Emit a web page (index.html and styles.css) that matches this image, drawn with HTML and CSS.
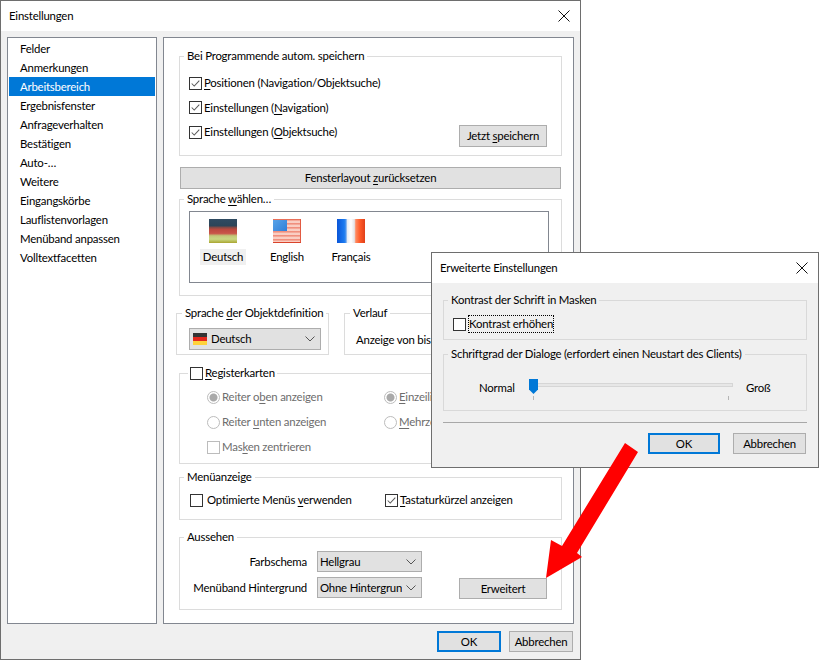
FILE: index.html
```html
<!DOCTYPE html>
<html lang="de">
<head>
<meta charset="utf-8">
<title>Einstellungen</title>
<link rel="stylesheet" href="styles.css">
</head>
<body>
<div class="window main-window">
  <header class="titlebar">
    <span>Einstellungen</span>
    <svg class="close" viewBox="0 0 12 12"><path d="M.5.5l11 11M11.5.5l-11 11"/></svg>
  </header>
  <div class="main-body">
    <div class="columns">
      <ul class="nav">
        <li>Felder</li>
        <li>Anmerkungen</li>
        <li class="selected">Arbeitsbereich</li>
        <li>Ergebnisfenster</li>
        <li>Anfrageverhalten</li>
        <li>Bestätigen</li>
        <li>Auto-…</li>
        <li>Weitere</li>
        <li>Eingangskörbe</li>
        <li>Lauflistenvorlagen</li>
        <li>Menüband anpassen</li>
        <li>Volltextfacetten</li>
      </ul>
      <div class="panel">
        <fieldset class="group g-save">
          <legend>Bei Programmende autom. speichern</legend>
          <div class="save-checks">
            <label class="check"><span class="box"><svg class="tick" viewBox="0 0 13 13"><path d="M2 6.5l3 3 6-6.5"/></svg></span><span><u>P</u>ositionen (Navigation/Objektsuche)</span></label>
            <label class="check"><span class="box"><svg class="tick" viewBox="0 0 13 13"><path d="M2 6.5l3 3 6-6.5"/></svg></span><span>Einstellungen (<u>N</u>avigation)</span></label>
            <label class="check"><span class="box"><svg class="tick" viewBox="0 0 13 13"><path d="M2 6.5l3 3 6-6.5"/></svg></span><span>Einstellungen (<u>O</u>bjektsuche)</span></label>
          </div>
          <button class="btn btn-save">Jetzt <u>s</u>peichern</button>
        </fieldset>
        <button class="btn btn-reset">Fensterlayout <u>z</u>urücksetzen</button>
        <fieldset class="group g-lang">
          <legend>Sprache <u>w</u>ählen…</legend>
          <div class="lang-list">
            <div class="lang"><div class="flag flag-de"></div><span class="lang-name active">Deutsch</span></div>
            <div class="lang"><div class="flag flag-en"></div><span class="lang-name">English</span></div>
            <div class="lang"><div class="flag flag-fr"></div><span class="lang-name">Français</span></div>
          </div>
        </fieldset>
        <div class="row-two">
          <fieldset class="group g-objlang">
            <legend>Sprache <u>d</u>er Objektdefinition</legend>
            <div class="select select-obj"><span class="mini-flag"></span><span class="select-text">Deutsch</span><svg class="chev" viewBox="0 0 10 6"><path d="M.5.5L5 5 9.5.5"/></svg></div>
          </fieldset>
          <fieldset class="group g-history">
            <legend>Verlauf</legend>
            <div class="history-text">Anzeige von bis</div>
          </fieldset>
        </div>
        <fieldset class="group g-tabs">
          <legend class="legend-check"><label class="check"><span class="box"></span><span><u>R</u>egisterkarten</span></label></legend>
          <div class="tab-grid">
            <label class="radio off"><span class="dot on"></span><span>Reiter o<u>b</u>en anzeigen</span></label>
            <label class="radio off"><span class="dot on"></span><span><u>E</u>inzeilig</span></label>
            <label class="radio off"><span class="dot"></span><span>Reiter <u>u</u>nten anzeigen</span></label>
            <label class="radio off"><span class="dot"></span><span><u>M</u>ehrzeilig</span></label>
            <label class="radio off"><span class="box box-off"></span><span>Mas<u>k</u>en zentrieren</span></label>
          </div>
        </fieldset>
        <fieldset class="group g-menu">
          <legend>Menüanzeige</legend>
          <div class="menu-row">
            <label class="check"><span class="box"></span><span class="wide-gap">Optimierte Menüs <u>v</u>erwenden</span></label>
            <label class="check"><span class="box"><svg class="tick" viewBox="0 0 13 13"><path d="M2 6.5l3 3 6-6.5"/></svg></span><span><u>T</u>astaturkürzel anzeigen</span></label>
          </div>
        </fieldset>
        <fieldset class="group g-look">
          <legend>Aussehen</legend>
          <div class="look-grid">
            <span class="look-label">Farbschema</span>
            <div class="select select-look"><span class="select-text">Hellgrau</span><svg class="chev" viewBox="0 0 10 6"><path d="M.5.5L5 5 9.5.5"/></svg></div>
            <span class="look-label">Menüband Hintergrund</span>
            <div class="select select-look"><span class="select-text clip">Ohne Hintergrund</span><svg class="chev" viewBox="0 0 10 6"><path d="M.5.5L5 5 9.5.5"/></svg></div>
          </div>
          <button class="btn btn-more">Erweitert</button>
        </fieldset>
      </div>
    </div>
    <footer class="main-footer">
      <button class="btn btn-ok">OK</button>
      <button class="btn btn-cancel">Abbrechen</button>
    </footer>
  </div>
</div>

<div class="window sub-window">
  <header class="titlebar">
    <span>Erweiterte Einstellungen</span>
    <svg class="close" viewBox="0 0 12 12"><path d="M.5.5l11 11M11.5.5l-11 11"/></svg>
  </header>
  <div class="sub-body">
    <fieldset class="group g-contrast">
      <legend>Kontrast der Schrift in Masken</legend>
      <label class="check"><span class="box box-white"></span><span class="focus">Kontrast erhöhen</span></label>
    </fieldset>
    <fieldset class="group g-size">
      <legend>Schriftgrad der Dialoge (erfordert einen Neustart des Clients)</legend>
      <div class="slider-row">
        <span class="slider-min">Normal</span>
        <div class="slider">
          <div class="track"></div>
          <svg class="thumb" viewBox="0 0 9 15"><path d="M0 0h9v10.500l-4.500 4.500L0 10.500z"/></svg>
          <div class="ticks"><i></i><i></i></div>
        </div>
        <span class="slider-max">Groß</span>
      </div>
    </fieldset>
    <hr class="sep">
    <div class="sub-footer">
      <button class="btn btn-ok sub-ok">OK</button>
      <button class="btn sub-cancel">Abbrechen</button>
    </div>
  </div>
</div>

<svg class="arrow" viewBox="0 0 100 140"><path d="M79 0L92 9 31 110 36 114 0 135 5 97 16 103z" fill="#ff0000"/></svg>
</body>
</html>
```

FILE: styles.css
```css
* { box-sizing: border-box; }
html, body { margin: 0; padding: 0; }
body {
  width: 819px;
  height: 660px;
  position: relative;
  overflow: hidden;
  background: #fff;
  font-family: Lato, "Liberation Sans", sans-serif;
  font-size: 11.4px;
  letter-spacing: -0.2px;
  line-height: 16px;
  color: #000;
}
u { text-decoration-thickness: 1px; text-underline-offset: 2px; }

.window {
  position: absolute;
  border: 1px solid #6e6e6e;
  background: #f0f0f0;
  display: flex;
  flex-direction: column;
}
.main-window { left: 0; top: 0; width: 581px; height: 660px; }
.sub-window { left: 431px; top: 252px; width: 388px; height: 216px; }

.titlebar {
  height: 30px;
  flex: none;
  background: #fff;
  display: flex;
  align-items: center;
  justify-content: space-between;
  padding: 0 10px 0 8px;
}
.close { width: 12px; height: 12px; fill: none; stroke: #111; stroke-width: 1; }

.main-body { flex: 1; padding: 6px 6px 0; display: flex; flex-direction: column; }
.columns { display: flex; gap: 6px; height: 587px; }

.nav {
  width: 150px;
  margin: 0;
  padding: 1px;
  list-style: none;
  background: #fff;
  border: 1px solid #828790;
}
.nav li { height: 19px; line-height: 19px; padding-left: 11px; }
.nav .selected { background: #0078d7; color: #fff; }

.panel {
  width: 411px;
  background: #fff;
  border: 1px solid #828790;
  padding: 10px 0 0 15px;
}

.group {
  margin: 0;
  padding: 0;
  min-width: 0;
  border: 1px solid #dcdcdc;
  position: relative;
}
.group legend { margin-left: 4px; padding: 0 3px; line-height: 16px; height: 16px; white-space: nowrap; }

.check, .radio { display: flex; align-items: center; gap: 2px; height: 16px; white-space: nowrap; }
.box {
  width: 13px;
  height: 13px;
  flex: none;
  border: 1px solid #333;
  background: #fff;
  display: block;
}
.box-white { background: #fff; }
.box-off { border-color: #bcbcbc; }
.tick { display: block; width: 11px; height: 11px; fill: none; stroke: #5a5a5a; stroke-width: 1.2; }

.dot {
  width: 13px;
  height: 13px;
  flex: none;
  border: 1px solid #bcbcbc;
  border-radius: 50%;
  background: #fff;
}
.dot.on { background: radial-gradient(circle, #a9a9a9 0 3.5px, #fff 4.5px); }
.off { color: #6d6d6d; }

.btn {
  font: inherit;
  letter-spacing: inherit;
  color: #000;
  background: #e1e1e1;
  border: 1px solid #adadad;
  padding: 0;
  display: block;
}

/* save group */
.g-save { width: 383px; height: 108px; display: flex; justify-content: space-between; }
.save-checks { padding: 11px 0 0 9px; display: flex; flex-direction: column; gap: 8.500px; }
.btn-save { width: 88px; height: 22px; margin: 61px 14px 0 0; }
.btn-reset { width: 381px; height: 22px; margin: 11px 0 2px 1px; }

/* language group */
.g-lang { width: 383px; height: 105px; }
.lang-list {
  margin: 4px 0 0 9px;
  width: 360px;
  height: 72px;
  border: 1px solid #828790;
  padding: 7px 0 0 1px;
  display: flex;
}
.lang { width: 64px; display: flex; flex-direction: column; align-items: center; gap: 6px; }
.lang-name { padding: 0 3px; height: 16px; }
.lang-name.active { background: #f0f0f0; }
.flag { width: 28px; height: 24px; }
.flag-de {
  background:
    linear-gradient(to bottom, #2f4b62 0, #2c4559 28%, #8b4a44 36%, #bd4a40 44%, #c9564a 60%, #c2c878 70%, #c9d884 84%, #aaa530 100%);
}
.flag-en {
  background:
    linear-gradient(135deg, #5aa4e8, #2f7fd8) left top / 14px 12px no-repeat,
    repeating-linear-gradient(to bottom, #ee8270 0, #f6b5a6 2px, #fde6df 3px, #f6b5a6 4px);
  box-shadow: inset 0 -1px 0 #d9432b, inset -1px 0 0 #e25a42, inset 0 1px 0 #e8705a;
}
.flag-fr {
  background: linear-gradient(to right, #0a55d8 0, #1a7af0 26%, #4f96ee 32%, #e8ecf4 37%, #fff 50%, #e4e4e8 62%, #ff8a60 67%, #ff5a28 82%, #e0401a 100%);
}

/* object language + history */
.row-two { display: flex; gap: 15px; margin: 9px 0 10px -3px; }
.g-objlang { width: 153px; height: 50px; }
.g-history { width: 218px; height: 50px; margin-left: 0; }
.g-objlang legend, .g-history legend { margin-left: 5px; }
.select {
  background: #e1e1e1;
  border: 1px solid #adadad;
  display: flex;
  align-items: center;
  padding-left: 2px;
  position: relative;
  white-space: nowrap;
}
.select-obj { width: 132px; height: 22px; margin: 7px 0 0 12px; padding-left: 3px; gap: 4px; }
.mini-flag {
  width: 14px;
  height: 12px;
  background: linear-gradient(to bottom, #333 0 33%, #e2261c 33% 66%, #ffd23a 66%);
}
.select-text { flex: 1; min-width: 0; overflow: hidden; }
.select-text.clip { margin-right: 19px; }
.chev {
  position: absolute;
  right: 5px;
  top: 7px;
  width: 10px;
  height: 6px;
  fill: none;
  stroke: #555;
  stroke-width: 1;
}
.history-text { padding: 11px 0 0 11px; white-space: nowrap; }

/* tabs */
.g-tabs { width: 383px; height: 99px; }
.legend-check { padding: 0 2px !important; margin-left: 8px !important; }
.tab-grid {
  display: grid;
  grid-template-columns: 177px 1fr;
  row-gap: 9px;
  padding: 8px 0 0 27px;
}

/* menu */
.g-menu { width: 383px; height: 51px; margin-top: 5px; }
.menu-row { display: grid; grid-template-columns: 195px 1fr; padding: 7px 0 0 10px; }
.wide-gap { margin-left: 2px; }

/* look */
.g-look { width: 383px; height: 81px; margin-top: 9px; display: flex; justify-content: space-between; }
.look-grid {
  display: grid;
  grid-template-columns: 127px 105px;
  column-gap: 10px;
  row-gap: 5px;
  padding-top: 6px;
  align-content: start;
}
.look-label { text-align: right; align-self: center; white-space: nowrap; }
.select-look { height: 21px; }
.btn-more { width: 88px; height: 21px; margin: 33px 14px 0 0; }

/* footer */
.main-footer { display: flex; justify-content: flex-end; gap: 8px; padding: 7px 1px 0 0; }
.btn-ok { width: 64px; height: 21px; border: 2px solid #0078d7; }
.btn-cancel { width: 64px; height: 21px; }

/* sub dialog */
.sub-body { padding: 9px 11px 0; flex: 1; }
.sub-body .group { border-color: #d9d9d9; width: 364px; }
.g-contrast { height: 48px; }
.g-contrast .check { margin: 8px 0 0 9px; gap: 3px; }
.focus { outline: 1px dotted #000; outline-offset: 0; }
.g-size { height: 65px; margin-top: 6px; }
.slider-row { display: flex; align-items: flex-start; padding: 17px 0 0 35px; }
.slider-min { width: 50px; margin-top: 1px; }
.slider-max { margin-top: 1px; }
.slider { width: 204px; height: 24px; position: relative; margin-right: 13px; }
.track { position: absolute; left: 1px; right: 0; top: 4px; height: 4px; background: #e7e7e7; border: 1px solid #d6d6d6; }
.thumb { position: absolute; left: 0; top: 0; width: 9px; height: 15px; fill: #0078d7; }
.ticks { position: absolute; left: 4px; right: 4px; top: 17px; display: flex; justify-content: space-between; }
.ticks i { width: 1px; height: 4px; background: #b5b5b5; display: block; }
.sep { border: 0; height: 1px; background: #a8a8a8; margin: 11px 0 0; width: 364px; }
.sub-footer { display: flex; justify-content: flex-end; gap: 13px; margin: 10px 1px 0 0; }
.sub-ok { width: 72px; }
.sub-cancel { width: 73px; height: 21px; }

.arrow { position: absolute; left: 546px; top: 443px; width: 100px; height: 140px; }
```
